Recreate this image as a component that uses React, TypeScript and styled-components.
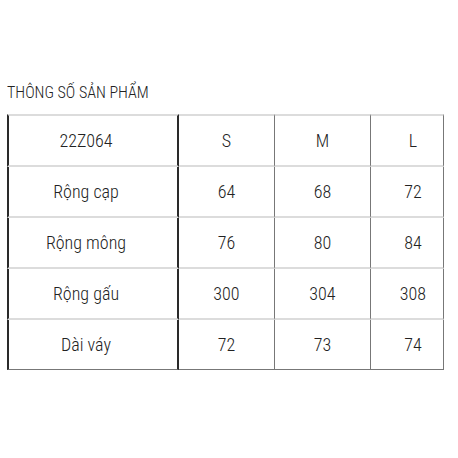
import styled, { createGlobalStyle } from 'styled-components';

const GlobalStyle = createGlobalStyle`
  html, body {
    margin: 0;
    padding: 0;
    background: #fff;
  }
  body {
    font-family: Roboto, "Liberation Sans", sans-serif;
    font-stretch: 75%;
    color: #333;
  }
`;

const Page = styled.div`
  width: 458px;
  height: 458px;
  padding: 84px 0 0 7px;
  box-sizing: border-box;
`;

const Title = styled.h2`
  margin: 0 0 12px;
  font-size: 16px;
  font-weight: 300;
  line-height: 18px;
  color: #222;
`;

const Table = styled.table`
  border-collapse: separate;
  border-spacing: 0;
  width: 437px;
  table-layout: fixed;
`;

const Col = styled.col<{ $w: number }>`
  width: ${(p) => p.$w}px;
`;

const Cell = styled.td<{ $col: number; $top?: boolean; $last?: boolean }>`
  height: 49px;
  padding: 0 ${(p) => (p.$col === 0 ? 14 : 0)}px 0 ${(p) => (p.$col === 3 ? 12 : 0)}px;
  text-align: center;
  vertical-align: middle;
  font-size: 18px;
  font-weight: 300;
  color: #222;
  border-top: ${(p) => (p.$top ? '2px solid #dcdcdc' : '0')};
  border-bottom: ${(p) => (p.$last ? '1px solid #777' : '2px solid #dcdcdc')};
  border-left: ${(p) => (p.$col === 0 ? '2px solid #2a2a2a' : '0')};
  border-right: ${(p) => (p.$col === 0 ? '2px solid #2a2a2a' : '1px solid #777')};
`;

const widths = [172, 96, 96, 73];

const rows: string[][] = [
  ['22Z064', 'S', 'M', 'L'],
  ['Rộng cạp', '64', '68', '72'],
  ['Rộng mông', '76', '80', '84'],
  ['Rộng gấu', '300', '304', '308'],
  ['Dài váy', '72', '73', '74'],
];

export default function App() {
  return (
    <>
      <GlobalStyle />
      <Page>
        <Title>THÔNG SỐ SẢN PHẨM</Title>
        <Table>
          <colgroup>
            {widths.map((w, i) => (
              <Col key={i} $w={w} />
            ))}
          </colgroup>
          <tbody>
            {rows.map((row, r) => (
              <tr key={r}>
                {row.map((val, c) => (
                  <Cell key={c} $col={c} $top={r === 0} $last={r === rows.length - 1}>
                    {val}
                  </Cell>
                ))}
              </tr>
            ))}
          </tbody>
        </Table>
      </Page>
    </>
  );
}
